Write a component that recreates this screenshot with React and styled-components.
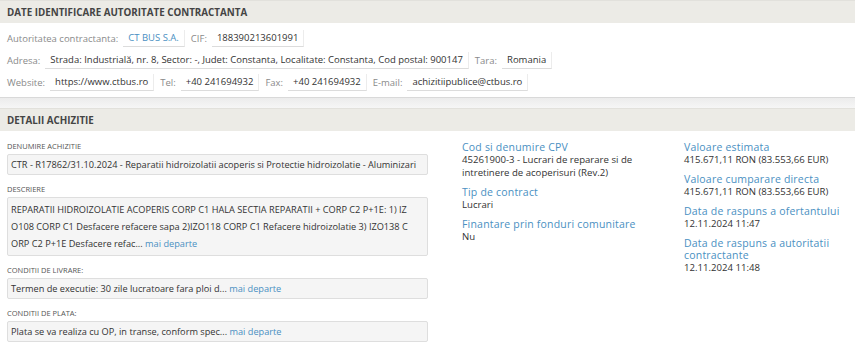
import React from 'react'
import styled, { createGlobalStyle } from 'styled-components'

const GlobalStyle = createGlobalStyle`
  body {
    margin: 0;
    background: #fff;
    font-family: "Open Sans", "DejaVu Sans", sans-serif;
    color: #333;
  }
`;

const Panel = styled.section`
  background: #fff;
  border-bottom: 1px solid #d9d9d9;
`;

const Gap = styled.div`
  height: 10px;
  background: linear-gradient(#ececec, #f6f6f6);
`;

const PanelHeader = styled.div`
  height: 22px;
  padding: 0 7px;
  display: flex;
  align-items: center;
  background: #ecebe6;
  border-top: 1px solid #e2e1dc;
  font-size: 9.8px;
  font-weight: 700;
  color: #444;
  text-transform: uppercase;
`;

const InfoBody = styled.div`
  padding: 6px 7px 5px;
  display: flex;
  flex-direction: column;
  gap: 3px;
`;

const InfoRow = styled.div`
  display: flex;
  align-items: center;
  height: 19px;
  font-size: 9.5px;
`;

const Label = styled.span`
  color: #8a8a8a;
  margin-right: 5px;
`;

const Value = styled.span`
  color: ${p => (p.$link ? '#4a90c2' : '#333')};
  padding: 1px 5px 2px;
  border-bottom: 1px solid #dcdcdc;
  border-right: 1px solid #ececec;
  margin-right: 6px;
`;

const DetailsBody = styled.div`
  display: grid;
  grid-template-columns: 455px 222px 1fr;
  padding: 10px 0 10px 7px;
`;

const LeftCol = styled.div`
  display: flex;
  flex-direction: column;
  padding-right: 34px;
`;

const FieldLabel = styled.div`
  font-size: 7.5px;
  color: #555;
  text-transform: uppercase;
  margin-bottom: 2px;
  line-height: 11px;
`;

const FieldBox = styled.div`
  background: #f5f5f5;
  border: 1px solid #dedede;
  border-radius: 2px;
  padding: ${p => (p.$multi ? '3px 16px 3px 3px' : '1px 4px 1px 3px')};
  font-size: 9.2px;
  line-height: 17px;
  color: #333;
  margin-bottom: 9px;
  word-break: break-all;
`;

const More = styled.span`
  color: #4a90c2;
`;

const InfoCol = styled.div`
  display: flex;
  flex-direction: column;
  gap: 7px;
  max-width: ${p => p.$max || 'none'};
`;

const Group = styled.div`
  display: flex;
  flex-direction: column;
`;

const GroupTitle = styled.div`
  font-size: 10.5px;
  color: #4a90c2;
  line-height: 12px;
  letter-spacing: 0.2px;
`;

const GroupValue = styled.div`
  font-size: 9.6px;
  color: #333;
  line-height: 13px;
`;

export default function App() {
  return (
    <>
      <GlobalStyle />
      <Panel>
        <PanelHeader>Date identificare autoritate contractanta</PanelHeader>
        <InfoBody>
          <InfoRow>
            <Label>Autoritatea contractanta:</Label>
            <Value $link>CT BUS S.A.</Value>
            <Label>CIF:</Label>
            <Value>188390213601991</Value>
          </InfoRow>
          <InfoRow>
            <Label>Adresa:</Label>
            <Value>Strada: Industrială, nr. 8, Sector: -, Judet: Constanta, Localitate: Constanta, Cod postal: 900147</Value>
            <Label>Tara:</Label>
            <Value>Romania</Value>
          </InfoRow>
          <InfoRow>
            <Label>Website:</Label>
            <Value>https://www.ctbus.ro</Value>
            <Label>Tel:</Label>
            <Value>+40 241694932</Value>
            <Label>Fax:</Label>
            <Value>+40 241694932</Value>
            <Label>E-mail:</Label>
            <Value>achizitiipublice@ctbus.ro</Value>
          </InfoRow>
        </InfoBody>
      </Panel>
      <Gap />
      <Panel>
        <PanelHeader>Detalii achizitie</PanelHeader>
        <DetailsBody>
          <LeftCol>
            <FieldLabel>Denumire achizitie</FieldLabel>
            <FieldBox>CTR - R17862/31.10.2024 - Reparatii hidroizolatii acoperis si Protectie hidroizolatie - Aluminizari</FieldBox>
            <FieldLabel>Descriere</FieldLabel>
            <FieldBox $multi>
              REPARATII HIDROIZOLATIE ACOPERIS CORP C1 HALA SECTIA REPARATII + CORP C2 P+1E: 1) IZO108 CORP C1 Desfacere refacere sapa 2)IZO118 CORP C1 Refacere hidroizolatie 3) IZO138 CORP C2 P+1E Desfacere refac... <More>mai departe</More>
            </FieldBox>
            <FieldLabel>Conditii de livrare:</FieldLabel>
            <FieldBox>
              Termen de executie: 30 zile lucratoare fara ploi d... <More>mai departe</More>
            </FieldBox>
            <FieldLabel>Conditii de plata:</FieldLabel>
            <FieldBox>
              Plata se va realiza cu OP, in transe, conform spec... <More>mai departe</More>
            </FieldBox>
          </LeftCol>
          <InfoCol $max="190px">
            <Group>
              <GroupTitle>Cod si denumire CPV</GroupTitle>
              <GroupValue>45261900-3 - Lucrari de reparare si de intretinere de acoperisuri (Rev.2)</GroupValue>
            </Group>
            <Group>
              <GroupTitle>Tip de contract</GroupTitle>
              <GroupValue>Lucrari</GroupValue>
            </Group>
            <Group>
              <GroupTitle>Finantare prin fonduri comunitare</GroupTitle>
              <GroupValue>Nu</GroupValue>
            </Group>
          </InfoCol>
          <InfoCol>
            <Group>
              <GroupTitle>Valoare estimata</GroupTitle>
              <GroupValue>415.671,11 RON (83.553,66 EUR)</GroupValue>
            </Group>
            <Group>
              <GroupTitle>Valoare cumparare directa</GroupTitle>
              <GroupValue>415.671,11 RON (83.553,66 EUR)</GroupValue>
            </Group>
            <Group>
              <GroupTitle>Data de raspuns a ofertantului</GroupTitle>
              <GroupValue>12.11.2024 11:47</GroupValue>
            </Group>
            <Group>
              <GroupTitle>Data de raspuns a autoritatii contractante</GroupTitle>
              <GroupValue>12.11.2024 11:48</GroupValue>
            </Group>
          </InfoCol>
        </DetailsBody>
      </Panel>
    </>
  );
}
